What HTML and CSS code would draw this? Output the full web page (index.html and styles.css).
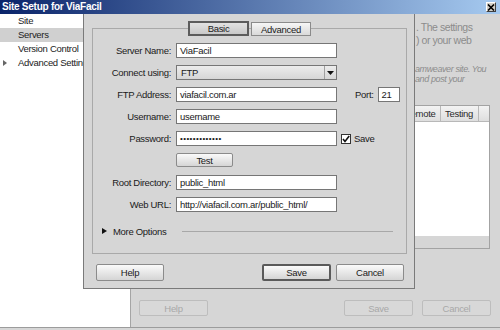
FILE: index.html
```html
<!DOCTYPE html>
<html>
<head>
<meta charset="utf-8">
<link rel="stylesheet" href="styles.css">
</head>
<body>
<div class="window">
  <div class="titlebar">
    <span class="title">Site Setup for ViaFacil</span>
    <span class="close"><svg width="8" height="7" viewBox="0 0 8 7"><path d="M1 0.5 L7 6.5 M7 0.5 L1 6.5" stroke="#000" stroke-width="1.6"/></svg></span>
  </div>
  <div class="main">
    <nav class="sidebar">
      <div class="nav-item">Site</div>
      <div class="nav-item selected">Servers</div>
      <div class="nav-item">Version Control</div>
      <div class="nav-item"><span class="nav-tri"></span>Advanced Settings</div>
    </nav>
    <section class="panel">
      <div class="intro">
        <div>. The settings</div>
        <div>) or your web</div>
      </div>
      <div class="note">
        <div>amweaver site. You</div>
        <div>and post your</div>
      </div>
      <div class="servers">
        <div class="servers-head">
          <div class="th th-name">Name</div>
          <div class="th th-remote">Remote</div>
          <div class="th th-testing">Testing</div>
          <div class="th th-fill"></div>
        </div>
        <div class="servers-body"></div>
        <div class="servers-foot"></div>
      </div>
      <div class="panel-buttons">
        <span class="btn disabled btn-help">Help</span>
        <span class="spacer"></span>
        <span class="btn disabled">Save</span>
        <span class="btn disabled">Cancel</span>
      </div>
    </section>
  </div>

  <div class="dialog">
    <div class="tabs">
      <span class="tab active">Basic</span>
      <span class="tab">Advanced</span>
    </div>
    <div class="group">
      <div class="form">
        <span class="lbl">Server Name:</span>
        <div class="field">ViaFacil</div>
        <div></div>

        <span class="lbl">Connect using:</span>
        <div class="select"><span class="select-val">FTP</span><span class="select-arrow"><svg width="7" height="4" viewBox="0 0 7 4"><path d="M0 0 H7 L3.5 4 Z" fill="#111"/></svg></span></div>
        <div></div>

        <span class="lbl">FTP Address:</span>
        <div class="field">viafacil.com.ar</div>
        <div class="extra"><span class="port-lbl">Port:</span><span class="field port">21</span></div>

        <span class="lbl">Username:</span>
        <div class="field">username</div>
        <div></div>

        <span class="lbl">Password:</span>
        <div class="field dots">&bull;&bull;&bull;&bull;&bull;&bull;&bull;&bull;&bull;&bull;&bull;&bull;&bull;</div>
        <div class="extra"><span class="check"><svg width="8" height="8" viewBox="0 0 8 8"><path d="M1 4 L3 6.5 L7.2 1" fill="none" stroke="#111" stroke-width="1.6"/></svg></span><span class="check-lbl">Save</span></div>

        <div></div>
        <div><span class="btn btn-test">Test</span></div>
        <div></div>

        <span class="lbl">Root Directory:</span>
        <div class="field">public_html</div>
        <div></div>

        <span class="lbl">Web URL:</span>
        <div class="field">http://viafacil.com.ar/public_html/</div>
        <div></div>
      </div>
      <div class="more">
        <span class="more-tri"></span>
        <span class="more-lbl">More Options</span>
        <span class="more-line"></span>
      </div>
    </div>
    <div class="dialog-buttons">
      <span class="btn">Help</span>
      <span class="spacer"></span>
      <span class="btn default">Save</span>
      <span class="btn">Cancel</span>
    </div>
  </div>
</div>
</body>
</html>
```

FILE: styles.css
```css
* { box-sizing: border-box; margin: 0; padding: 0; }

body {
  width: 500px;
  height: 330px;
  overflow: hidden;
  background: #d6d6d6;
  font-family: "Liberation Sans", Arial, sans-serif;
  font-size: 9.5px;
  letter-spacing: -0.3px;
  color: #1a1a1a;
}

.window {
  position: relative;
  width: 500px;
  height: 330px;
  display: flex;
  flex-direction: column;
  background: #d6d6d6;
}

/* title bar */
.titlebar {
  height: 14px;
  flex: none;
  display: flex;
  align-items: center;
  justify-content: space-between;
  padding: 0 4px 0 2px;
  background: linear-gradient(to right, #0a246a, #a6caf0);
}
.title {
  color: #fff;
  font-weight: bold;
  font-size: 10px;
  letter-spacing: -0.25px;
  line-height: 14px;
}
.close {
  width: 10px;
  height: 10px;
  display: flex;
  align-items: center;
  justify-content: center;
  background: #d4d0c8;
  border: 1px solid;
  border-color: #fff #404040 #404040 #fff;
}

/* main area */
.main {
  height: 314px;
  flex: none;
  display: flex;
  border-bottom: 1px solid #9c9c9c;
}
.sidebar {
  width: 131px;
  flex: none;
  background: #fff;
  border-right: 1px solid #a5a5a5;
}
.nav-item {
  height: 14px;
  line-height: 14px;
  padding-left: 18px;
  font-size: 9.5px;
  letter-spacing: -0.3px;
  color: #222;
  display: flex;
  align-items: center;
}
.nav-item.selected { background: #d0d0d0; }
.nav-tri {
  width: 0;
  height: 0;
  margin-left: -15px;
  margin-right: 11px;
  border-left: 4px solid #666;
  border-top: 3px solid transparent;
  border-bottom: 3px solid transparent;
}

.panel {
  flex: 1;
  display: flex;
  flex-direction: column;
  padding: 7px 9px 11px 8px;
  background: #d6d6d6;
}
.intro {
  margin-left: 277px;
  font-size: 10.5px;
  letter-spacing: -0.45px;
  line-height: 13px;
  color: #8c8c8c;
  white-space: nowrap;
}
.note {
  margin-left: 276px;
  margin-top: 17px;
  font-size: 9px;
  letter-spacing: -0.4px;
  font-style: italic;
  line-height: 10px;
  color: #8c8c8c;
  white-space: nowrap;
}
.servers {
  margin-top: 21px;
  margin-right: 1px;
  border: 1px solid #a3a3a3;
}
.servers-head {
  height: 16px;
  display: flex;
  background: linear-gradient(#f3f3f3, #dedede);
  border-bottom: 1px solid #b8b8b8;
}
.th {
  line-height: 15px;
  padding-left: 3px;
  border-right: 1px solid #b8b8b8;
  color: #2a2a2a;
}
.th-name { flex: 1; }
.th-remote { width: 40px; }
.th-testing { width: 38px; padding-left: 4px; }
.th-fill { width: 10px; border-right: none; }
.servers-body { height: 114px; background: #fff; }
.servers-foot { height: 12px; background: #d6d6d6; }

.panel-buttons {
  margin-top: auto;
  display: flex;
  gap: 9px;
}
.spacer { flex: 1; }

/* buttons */
.btn {
  display: flex;
  align-items: center;
  justify-content: center;
  width: 68px;
  height: 17px;
  border: 1px solid #8b8b8b;
  border-radius: 2px;
  background: linear-gradient(#fafafa, #d5d5d5);
  color: #1a1a1a;
}
.btn.default {
  width: 69px;
  border: 2px solid #5a5a5a;
}
.btn.disabled {
  width: 69px;
  height: 16px;
  border-color: #bdbdbd;
  background: #d8d8d8;
  color: #a8a8a8;
}

/* dialog */
.dialog {
  position: absolute;
  left: 83px;
  top: 14px;
  width: 332px;
  height: 275px;
  display: flex;
  flex-direction: column;
  padding: 7px 7px 0 8px;
  background: #d6d6d6;
  border: 1px solid #7a7a7a;
  border-top: none;
}
.tabs {
  position: relative;
  z-index: 1;
  display: flex;
  justify-content: center;
  gap: 2px;
  height: 15px;
}
.tab {
  width: 60px;
  height: 14px;
  margin-top: 1px;
  display: flex;
  align-items: center;
  justify-content: center;
  border: 1px solid #8b8b8b;
  background: linear-gradient(#f6f6f6, #d9d9d9);
}
.tab.active {
  width: 61px;
  height: 15px;
  margin-top: 0;
  border: 2px solid #5c5c5c;
  background: linear-gradient(#e2e2e2, #c9c9c9);
}
.group {
  margin-top: -8px;
  border: 1px solid #a9a9a9;
  padding: 14px 0 15px 0;
}
.form {
  display: grid;
  grid-template-columns: 78px 161px 1fr;
  grid-auto-rows: 15px;
  column-gap: 5px;
  row-gap: 7px;
}
.lbl {
  text-align: right;
  line-height: 15px;
  white-space: nowrap;
}
.field {
  height: 15px;
  line-height: 13px;
  padding-left: 3px;
  background: #fff;
  border: 1px solid #767676;
  white-space: nowrap;
  overflow: hidden;
}
.dots { font-size: 8px; letter-spacing: 0.4px; line-height: 13px; }
.select {
  height: 15px;
  display: flex;
  border: 1px solid #767676;
  background: linear-gradient(#ececec, #d6d6d6);
}
.select-val { flex: 1; padding-left: 4px; line-height: 13px; }
.select-arrow {
  width: 12px;
  display: flex;
  align-items: center;
  justify-content: center;
  border-left: 1px solid #a0a0a0;
}
.extra {
  display: flex;
  align-items: center;
}
.port-lbl { margin-left: 13px; margin-right: 4px; }
.port { width: 22px; }
.check {
  width: 10px;
  height: 10px;
  margin-left: -1px;
  display: flex;
  align-items: center;
  justify-content: center;
  background: #fff;
  border: 1px solid #333;
}
.check-lbl { margin-left: 3px; }
.btn-test { width: 57px; height: 14px; }

.more {
  margin-top: 12px;
  height: 14px;
  display: flex;
  align-items: center;
  padding-left: 9px;
}
.more-tri {
  width: 0;
  height: 0;
  border-left: 5px solid #111;
  border-top: 3.5px solid transparent;
  border-bottom: 3.5px solid transparent;
}
.more-lbl { margin-left: 6px; }
.more-line {
  flex: 1;
  height: 1px;
  margin-left: 16px;
  margin-right: 13px;
  background: #a8a8a8;
}

.dialog-buttons {
  margin-top: 10px;
  display: flex;
  gap: 5px;
  padding: 0 3px 0 4px;
}
```
